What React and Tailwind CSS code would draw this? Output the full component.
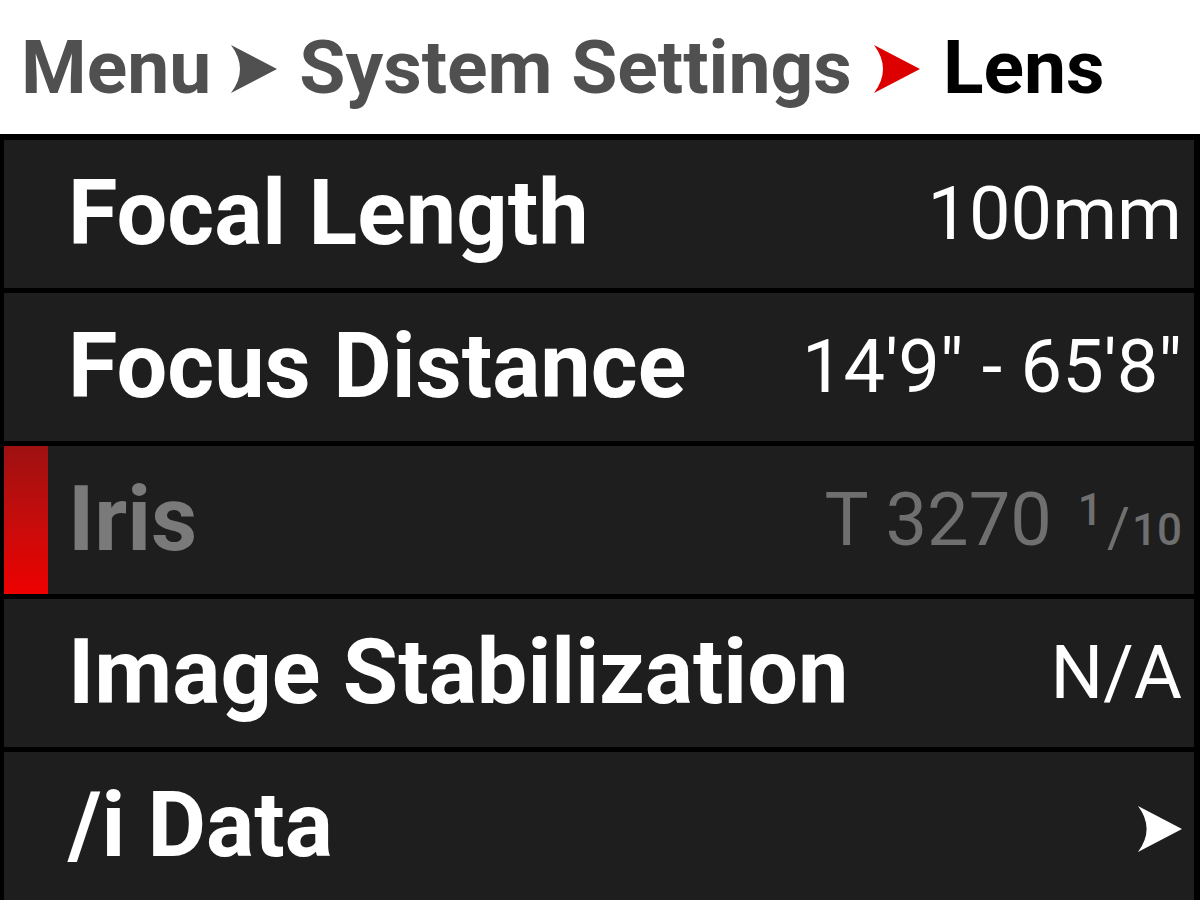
import React from 'react';

// arrowhead used in the breadcrumb and on submenu rows
function Arrow({ color, className }) {
  return (
    <svg viewBox="0 0 46 48" className={className}>
      <path d="M0 0 L46 24 L0 48 Q18 24 0 0 Z" fill={color} />
    </svg>
  );
}

const rows = [
  { label: 'Focal Length', value: '100mm' },
  { label: 'Focus Distance', value: '14\'9" - 65\'8"' },
  { label: 'Iris', value: 'iris', selected: true },
  { label: 'Image Stabilization', value: 'N/A' },
  { label: '/i Data', value: 'arrow' },
];

function IrisValue() {
  return (
    <span className="flex items-baseline text-[#6f6f6f]">
      <span>T 3270</span>
      <span className="ml-[26px] flex items-baseline font-medium">
        <span className="relative top-[-20px] text-[44px]">1</span>
        <span className="relative top-[2px] ml-[4px] text-[56px] font-normal">/</span>
        <span className="ml-[2px] text-[44px]">10</span>
      </span>
    </span>
  );
}

export default function App() {
  return (
    <div
      className="w-[1200px] h-[900px] flex flex-col bg-black overflow-hidden"
      style={{ fontFamily: 'Roboto, "Liberation Sans", sans-serif' }}
    >
      {/* breadcrumb header */}
      <div className="h-[134px] bg-white flex items-center pl-[21px] text-[75px] font-bold leading-none">
        <span className="text-[#505050]">Menu</span>
        <Arrow color="#505050" className="w-[46px] h-[48px] ml-[20px] mt-[4px]" />
        <span className="text-[#505050] ml-[22px]">System Settings</span>
        <Arrow color="#dd0000" className="w-[46px] h-[48px] ml-[22px] mt-[4px]" />
        <span className="text-black ml-[23px]">Lens</span>
      </div>

      {/* list */}
      <div className="flex flex-col gap-[5px] pt-[6px] pl-[4px] pr-[6px]">
        {rows.map((r) => (
          <div key={r.label} className="h-[148px] bg-[#1e1e1e] flex items-center pr-[12px]">
            <div
              className={
                'w-[44px] h-full ' +
                (r.selected ? 'bg-gradient-to-b from-[#9e1010] to-[#ee0000]' : '')
              }
            />
            <span
              className={
                'ml-[20px] text-[90px] font-bold leading-none ' +
                (r.selected ? 'text-[#7a7a7a]' : 'text-white')
              }
            >
              {r.label}
            </span>
            <div className="ml-auto text-[74px] leading-none text-white">
              {r.value === 'iris' ? (
                <IrisValue />
              ) : r.value === 'arrow' ? (
                <Arrow color="#ffffff" className="w-[44px] h-[46px] mt-[6px]" />
              ) : (
                <span>{r.value}</span>
              )}
            </div>
          </div>
        ))}
      </div>
    </div>
  );
}
